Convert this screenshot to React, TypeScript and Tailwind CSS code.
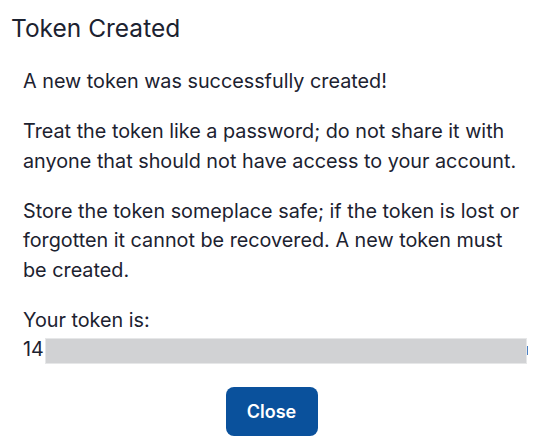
export default function App() {
  return (
    <div className="w-[543px] h-[447px] bg-white font-['Inter',sans-serif] text-[#1c2230]">
      <h2 className="pt-3 pl-[11px] text-[24.5px] leading-8 font-normal">Token Created</h2>
      <div className="pl-[23px] pr-[15px] pt-[23px] text-[19.8px] leading-[29.5px]">
        <p>A new token was successfully created!</p>
        <p className="mt-[20.5px]">
          Treat the token like a password; do not share it with anyone that should not have access to your account.
        </p>
        <p className="mt-[20.5px]">
          Store the token someplace safe; if the token is lost or forgotten it cannot be recovered. A new token must
          be created.
        </p>
        <p className="mt-[20.5px]">Your token is:</p>
        <div className="flex items-center h-[30px]">
          <span>14</span>
          <span className="ml-[1px] mt-[2px] h-[26px] flex-1 bg-[#d1d2d4] border border-[#e6e7e8]" />
          <span className="h-[9px] w-[1px] bg-[#4a80c4]" />
        </div>
      </div>
      <div className="flex justify-center mt-[22px]">
        <button className="h-[49px] w-[92px] rounded-lg bg-[#0a519c] text-white text-[18px] font-semibold">
          Close
        </button>
      </div>
    </div>
  );
}
